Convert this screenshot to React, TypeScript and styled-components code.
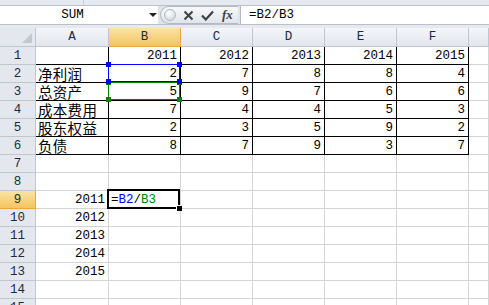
import styled, { createGlobalStyle } from "styled-components"

const GlobalStyle = createGlobalStyle`
  html, body {
    margin: 0;
    padding: 0;
    background: #ffffff;
  }
`

const cellFont = `"Liberation Mono", "Noto Sans CJK SC", monospace`

// =================================== Toolbar =====================================================

const Window = styled.div`
  width: 489px;
  height: 305px;
  overflow: hidden;
  background: #ffffff;
  display: flex;
  flex-direction: column;
  font-family: ${cellFont};
  & > * {
    flex-shrink: 0;
  }
`
const RibbonEdge = styled.div`
  height: 5px;
  background: #e6eaf0;
  border-bottom: 1px solid #b9c0c9;
  display: flex;
`
const RibbonDivider = styled.span`
  width: 83px;
  border-right: 1px solid #c6ccd4;
`
const FormulaRow = styled.div`
  height: 18px;
  display: flex;
  background: #dfe4ea;
`
const NameBox = styled.div`
  width: 158px;
  background: #ffffff;
  display: flex;
  align-items: center;
  font-size: 12.5px;
  color: #000;
`
const NameText = styled.span`
  width: 145px;
  text-align: center;
`
const DropArrow = styled.span`
  width: 0;
  height: 0;
  margin-left: 4px;
  border-left: 4px solid transparent;
  border-right: 4px solid transparent;
  border-top: 4px solid #222;
`
const ButtonPill = styled.div`
  width: 78px;
  margin-left: 2px;
  box-sizing: border-box;
  border: 1px solid #b3bac4;
  border-right: none;
  border-radius: 9px 0 0 9px;
  background: linear-gradient(#f7f8fa, #e1e5ea);
  display: flex;
  align-items: center;
  gap: 7px;
  padding-left: 3px;
`
const Bead = styled.span`
  width: 12px;
  height: 12px;
  border-radius: 50%;
  box-sizing: border-box;
  border: 1px solid #b4bac2;
  background: radial-gradient(circle at 40% 35%, #ffffff 0, #e6e9ed 45%, #c9ced5 100%);
`
const FxLabel = styled.span`
  font-family: "Liberation Serif", serif;
  font-style: italic;
  font-weight: bold;
  font-size: 13px;
  color: #3c4148;
  margin-left: 1px;
`
const FormulaInput = styled.div`
  flex: 1;
  margin-left: 2px;
  background: #ffffff;
  border-left: 1px solid #b3bac4;
  display: flex;
  align-items: center;
  padding-left: 8px;
  font-size: 12.5px;
  color: #000;
`
const BarGap = styled.div`
  height: 3px;
  background: #e6eaf0;
  border-top: 1px solid #b9c0c9;
`

// =================================== Grid =====================================================

const Sheet = styled.div`
  display: grid;
  grid-template-columns: 36px 73px repeat(5, 72px) 1fr;
  grid-template-rows: 19px repeat(15, 18px);
`
const Corner = styled.div`
  box-sizing: border-box;
  background: #e4e8ee;
  border-right: 1px solid #c0c6cf;
  border-bottom: 1px solid #c0c6cf;
  position: relative;
  &::after {
    content: "";
    position: absolute;
    right: 3px;
    bottom: 3px;
    border-left: 10px solid transparent;
    border-bottom: 10px solid #c3c8cf;
  }
`
const Header = styled.div<{ $active?: boolean; $row?: boolean }>`
  box-sizing: border-box;
  display: flex;
  align-items: center;
  justify-content: center;
  font-size: 12.5px;
  color: #1e2a3a;
  background: ${(p) =>
    p.$active
      ? "linear-gradient(#fbe3a6, #f4c45e)"
      : p.$row
      ? "#e4e8ee"
      : "linear-gradient(#f3f5f8, #e2e6ec)"};
  border-right: 1px solid ${(p) => (p.$active ? "#e8a83a" : "#c0c6cf")};
  border-bottom: 1px solid ${(p) => (p.$active ? "#e8a83a" : "#c0c6cf")};
`
const Cell = styled.div<{ $boxed?: boolean; $align?: "left" | "right" }>`
  box-sizing: border-box;
  position: relative;
  display: flex;
  align-items: center;
  justify-content: ${(p) => (p.$align === "right" ? "flex-end" : "flex-start")};
  padding: ${(p) => (p.$align === "right" ? "1px 3px 0 0" : "1px 0 0 2px")};
  font-size: 12.5px;
  line-height: 16px;
  color: #000;
  white-space: nowrap;
  border-right: 1px solid ${(p) => (p.$boxed ? "#000" : "#d4d4d4")};
  border-bottom: 1px solid ${(p) => (p.$boxed ? "#000" : "#d4d4d4")};
`
const CjkText = styled.span`
  font-family: "Noto Sans CJK SC", sans-serif;
  font-size: 14.5px;
  letter-spacing: 0.3px;
  line-height: 16px;
`
const RefBox = styled.div<{ $color: string; $layer: number }>`
  position: absolute;
  box-sizing: border-box;
  top: -1px;
  left: -1px;
  right: 0;
  bottom: 0;
  border: 1px solid ${(p) => p.$color};
  z-index: ${(p) => p.$layer};
  pointer-events: none;
`
const Handle = styled.span<{ $color: string; $v: "top" | "bottom"; $h: "left" | "right" }>`
  position: absolute;
  width: 5px;
  height: 5px;
  background: ${(p) => p.$color};
  ${(p) => p.$v}: -3px;
  ${(p) => p.$h}: -3px;
`
const ActiveBox = styled.div`
  position: absolute;
  box-sizing: border-box;
  top: -2px;
  left: -2px;
  right: 0;
  bottom: -1px;
  border: 2px solid #000;
  z-index: 4;
`
const FillHandle = styled.span`
  position: absolute;
  right: -4px;
  bottom: -4px;
  width: 5px;
  height: 5px;
  background: #000;
  border: 1px solid #fff;
  border-right: none;
  border-bottom: none;
`
const Ref = styled.span<{ $color: string }>`
  color: ${(p) => p.$color};
`

const cols = ["A", "B", "C", "D", "E", "F", ""]

const table: (string | number)[][] = [
  ["", 2011, 2012, 2013, 2014, 2015],
  ["净利润", 2, 7, 8, 8, 4],
  ["总资产", 5, 9, 7, 6, 6],
  ["成本费用", 7, 4, 4, 5, 3],
  ["股东权益", 2, 3, 5, 9, 2],
  ["负债", 8, 7, 9, 3, 7],
]

const years = [2011, 2012, 2013, 2014, 2015]

const RefHandles = ({ color }: { color: string }) => (
  <>
    <Handle $color={color} $v="top" $h="left" />
    <Handle $color={color} $v="top" $h="right" />
    <Handle $color={color} $v="bottom" $h="left" />
    <Handle $color={color} $v="bottom" $h="right" />
  </>
)

const CrossIcon = () => (
  <svg width="11" height="11" viewBox="0 0 11 11">
    <path d="M1.5 1.5 L9.5 9.5 M9.5 1.5 L1.5 9.5" stroke="#3c4148" strokeWidth="2" />
  </svg>
)

const CheckIcon = () => (
  <svg width="13" height="11" viewBox="0 0 13 11">
    <path d="M1 5.5 L4.8 9.5 L12 1.5" stroke="#3c4148" strokeWidth="2.2" fill="none" />
  </svg>
)

const renderCell = (r: number, c: number) => {
  // r: 1-based sheet row, c: 0..6 (A..G)
  const key = `${r}-${c}`
  if (r <= 6 && c <= 5) {
    const v = table[r - 1][c]
    const isText = typeof v === "string"
    return (
      <Cell key={key} $boxed $align={isText ? "left" : "right"}>
        {isText ? <CjkText>{v}</CjkText> : v}
        {r === 2 && c === 1 && (
          <RefBox $color="#0000ff" $layer={3}>
            <RefHandles color="#0000ff" />
          </RefBox>
        )}
        {r === 3 && c === 1 && (
          <RefBox $color="#008000" $layer={2}>
            <RefHandles color="#008000" />
          </RefBox>
        )}
      </Cell>
    )
  }
  if (c === 0 && r >= 9 && r <= 13) {
    return (
      <Cell key={key} $align="right">
        {years[r - 9]}
      </Cell>
    )
  }
  if (c === 1 && r === 9) {
    return (
      <Cell key={key} $align="left">
        =<Ref $color="#0000ff">B2</Ref>/<Ref $color="#008000">B3</Ref>
        <ActiveBox>
          <FillHandle />
        </ActiveBox>
      </Cell>
    )
  }
  return <Cell key={key} />
}

const App = () => {
  const rows = Array.from({ length: 15 }, (_, i) => i + 1)
  return (
    <Window>
      <GlobalStyle />
      <RibbonEdge>
        <RibbonDivider />
      </RibbonEdge>
      <FormulaRow>
        <NameBox>
          <NameText>SUM</NameText>
          <DropArrow />
        </NameBox>
        <ButtonPill>
          <Bead />
          <CrossIcon />
          <CheckIcon />
          <FxLabel>fx</FxLabel>
        </ButtonPill>
        <FormulaInput>=B2/B3</FormulaInput>
      </FormulaRow>
      <BarGap />
      <Sheet>
        <Corner />
        {cols.map((l, i) => (
          <Header key={l + i} $active={l === "B"}>
            {l}
          </Header>
        ))}
        {rows.map((r) => [
          <Header key={"h" + r} $row $active={r === 9}>
            {r}
          </Header>,
          ...cols.map((_, c) => renderCell(r, c)),
        ])}
      </Sheet>
    </Window>
  )
}

export default App
